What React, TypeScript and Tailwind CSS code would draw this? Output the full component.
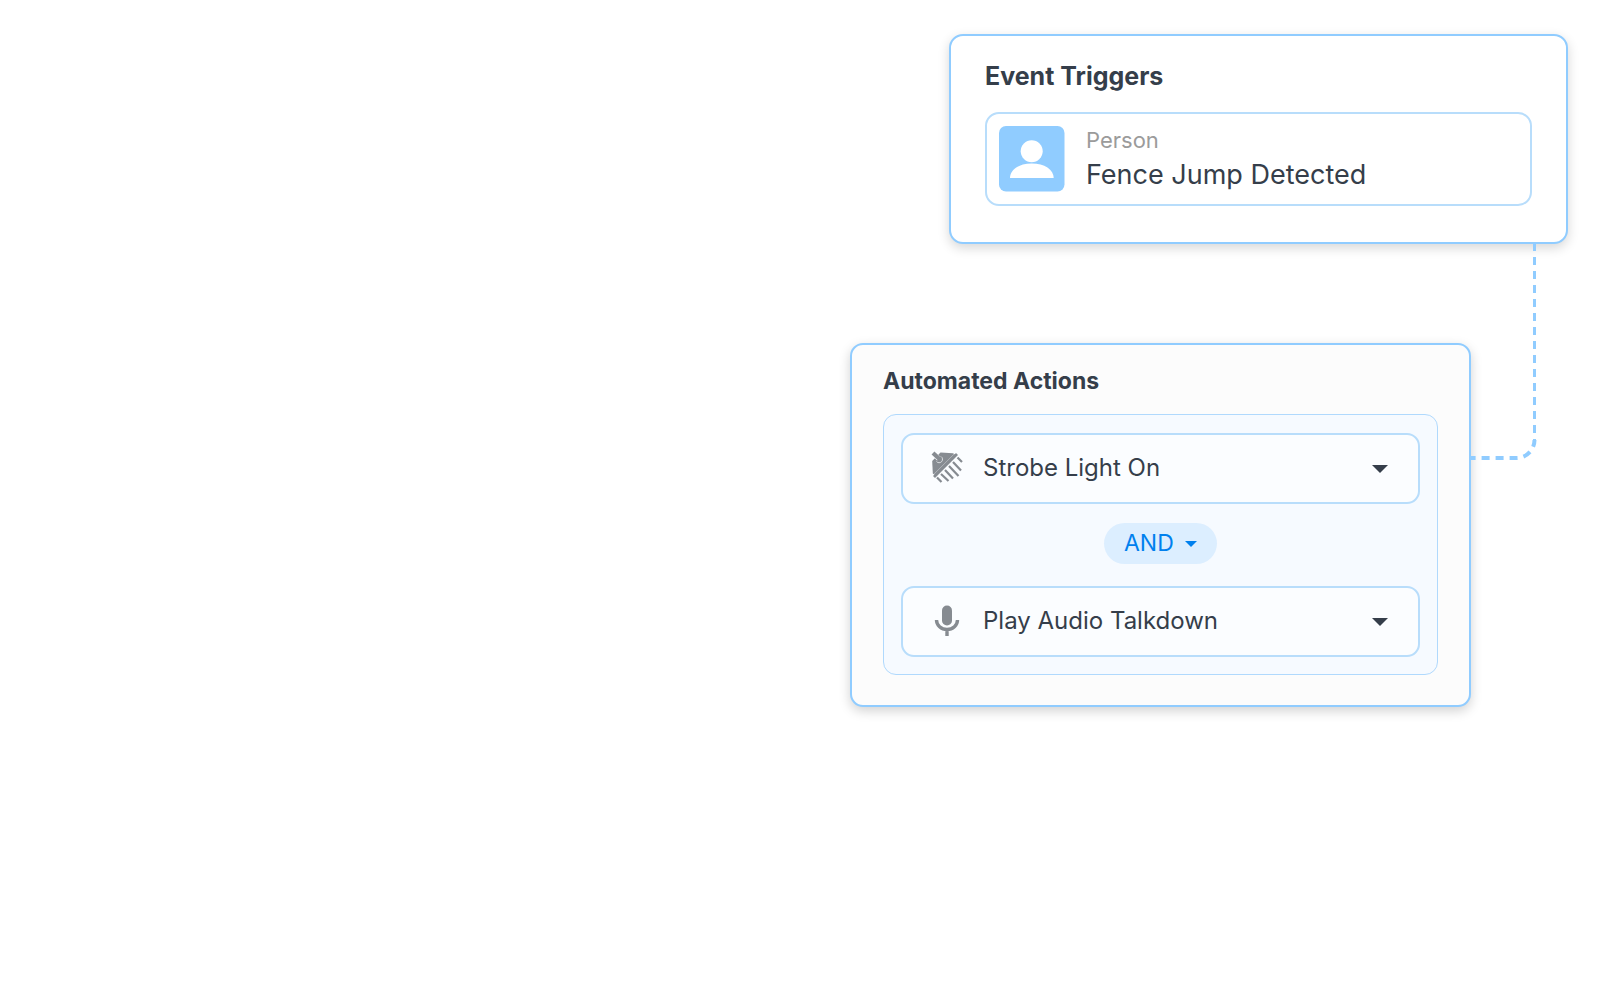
import { ReactNode } from "react";

const actions = ["Strobe Light On", "Play Audio Talkdown"];

function PersonIcon() {
  return (
    <svg viewBox="0 0 66 66" className="w-[66px] h-[66px] shrink-0" aria-hidden="true">
      <rect width="65.5" height="65.5" rx="7" fill="#90ccff" />
      <circle cx="32.7" cy="25.2" r="11" fill="#fff" />
      <path d="M11 52C11 43.5 20 37.5 32.7 37.5S54.7 43.5 54.7 52Z" fill="#fff" />
    </svg>
  );
}

function StrobeIcon() {
  return (
    <svg viewBox="0 0 32 32" className="w-8 h-8" aria-hidden="true">
      <path d="M9.5 1.5L22 2.2 25 4.2 4 24 1.8 22.5 1.2 10Z" fill="#868b91" />
      <path d="M2.3 2.3L8 8" stroke="#fbfdff" strokeWidth="5" />
      <path d="M5.5 10.5A3.4 3.4 0 1 0 10 5.5" fill="#868b91" stroke="#fbfdff" strokeWidth=".7" />
      <path d="M2 2L9 8.5" stroke="#868b91" strokeWidth="4.2" />
      <path d="M2.6 23.6L23.6 2.6" stroke="#fbfdff" strokeWidth=".4" />
      <path d="M3 26L26 3" stroke="#868b91" strokeWidth="2.8" />
      <path
        d="M6 26.5L10.5 31M10 23L17.5 30M14 19L22 27.5M18 15L27.5 25M22 11L30 19.5M26.5 6.5L31 11"
        stroke="#868b91"
        strokeWidth="2.2"
      />
    </svg>
  );
}

function MicIcon() {
  return (
    <svg viewBox="0 0 32 32" className="w-8 h-8" aria-hidden="true">
      <rect x="11" y="1.5" width="10" height="20" rx="5" fill="#868b91" />
      <path d="M5.5 16A10.5 9.5 0 0 0 26.5 16M16 25V32" fill="none" stroke="#868b91" strokeWidth="3.4" />
    </svg>
  );
}

function Caret({ className }: { className: string }) {
  return (
    <svg viewBox="0 0 16 8" className={className} aria-hidden="true">
      <path d="M0 0H16L8 8Z" fill="currentColor" />
    </svg>
  );
}

function ActionSelect({ label, value, icon }: { label: string; value: string; icon: ReactNode }) {
  return (
    <div className="relative">
      <select
        aria-label={label}
        defaultValue={value}
        className="block w-full h-[71px] appearance-none rounded-[13px] border-2 border-[#b8ddfb] bg-[#fbfdff] pl-20 pr-16 pb-0.5 text-2xl text-[#353e4a]"
      >
        {actions.map((action) => (
          <option key={action}>{action}</option>
        ))}
      </select>
      <span className="pointer-events-none absolute inset-y-0 left-[30px] flex items-center pb-1">{icon}</span>
      <span className="pointer-events-none absolute inset-y-0 right-8 flex items-center text-[#353e4a]">
        <Caret className="w-4 h-2" />
      </span>
    </div>
  );
}

export default function App() {
  return (
    <main className="flex min-h-screen flex-col items-end bg-white pt-[34px] pr-8 font-['Inter',sans-serif] text-[#353e4a]">
      <div className="relative flex flex-col items-end gap-[99px]">
        <section className="w-[619px] rounded-[14px] border-2 border-[#90ccff] bg-white px-[34px] pt-6 pb-9 shadow-[0_4px_12px_rgba(0,0,0,0.16)]">
          <h2 className="text-[25px] leading-8 font-bold">Event Triggers</h2>
          <div className="mt-5 flex h-[94px] items-center gap-[21px] rounded-[14px] border-2 border-[#b8ddfb] px-3">
            <PersonIcon />
            <div>
              <p className="text-[22px] leading-8 text-[#9b9b9b]">Person</p>
              <p className="text-[27px] leading-[38px]">Fence Jump Detected</p>
            </div>
          </div>
        </section>

        <section className="mr-[97px] w-[621px] rounded-[13px] border-2 border-[#90ccff] bg-[#fcfcfc] px-[31px] pt-5 pb-[30px] shadow-[0_4px_12px_rgba(0,0,0,0.18)]">
          <h2 className="text-[23px] leading-8 font-bold">Automated Actions</h2>
          <div className="mt-[17px] rounded-[13px] border border-[#b0d9fd] bg-[#f6faff] px-[17px] pt-[18px] pb-[17px]">
            <ActionSelect label="First action" value="Strobe Light On" icon={<StrobeIcon />} />
            <div className="flex justify-center pt-[19px] pb-[22px]">
              <div className="relative">
                <select
                  aria-label="Operator"
                  defaultValue="AND"
                  className="block h-[41px] w-[113px] appearance-none rounded-full bg-[#dceeff] pl-5 text-[23px] text-[#0080ee]"
                >
                  <option>AND</option>
                  <option>OR</option>
                </select>
                <span className="pointer-events-none absolute inset-y-0 right-5 flex items-center text-[#0080ee]">
                  <Caret className="w-3 h-1.5" />
                </span>
              </div>
            </div>
            <ActionSelect label="Second action" value="Play Audio Talkdown" icon={<MicIcon />} />
          </div>
        </section>

        {/* connector between the two cards */}
        <svg
          viewBox="0 0 70 220"
          className="pointer-events-none absolute top-[210px] right-[27px] h-[220px] w-[70px]"
          fill="none"
          stroke="#90ccff"
          strokeDasharray="8 6"
          strokeDashoffset="1"
          aria-hidden="true"
        >
          <path d="M63.5 0V196" strokeWidth="3" />
          <path d="M63.5 196A18 18 0 0 1 45.5 214H0" strokeWidth="4" />
        </svg>
      </div>
    </main>
  );
}
